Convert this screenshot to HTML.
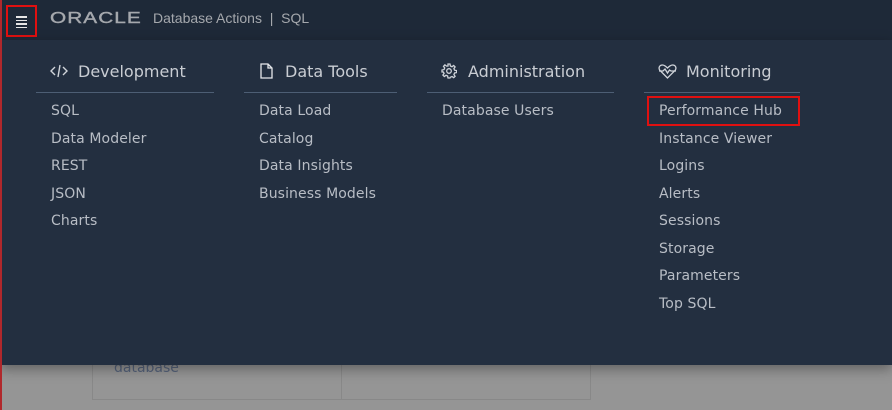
<!DOCTYPE html>
<html><head><style>
*{margin:0;padding:0;box-sizing:border-box}
body{width:892px;height:410px;overflow:hidden;background:#959595;position:relative;font-family:"DejaVu Sans",sans-serif}
.hdr{position:absolute;left:0;top:0;width:892px;height:40px;background:#1e2938}
.menu{position:absolute;left:0;top:40px;width:892px;height:325px;background:#232f40;box-shadow:0 4px 12px rgba(0,0,0,.35)}
.redl{position:absolute;left:0;top:0;width:2px;height:410px;background:#b0282c;z-index:5}
.ham{position:absolute;left:6px;top:5px;width:31px;height:32px;border:2px solid #e01010}
.ham i{position:absolute;left:8px;width:11px;height:1.5px;background:#e6e6e6}
.logo{position:absolute;left:50px;top:10px;color:#a5a8ad;font:16px "Liberation Sans",sans-serif;letter-spacing:.8px;transform:scaleX(1.3);transform-origin:left;-webkit-text-stroke:.4px #a5a8ad}
.title{position:absolute;left:153px;top:10px;color:#a5a8ad;font:14px "Liberation Sans",sans-serif}
.h{position:absolute;color:#c9cdd3;font-size:16px;letter-spacing:0}
.line{position:absolute;height:1px;background:#4d5e74}
.it{position:absolute;color:#b8bdc5;font-size:14px;letter-spacing:.1px}
.card{position:absolute;left:92px;top:340px;width:499px;height:60px;border:1px solid #888;border-top:none}
.card:after{content:"";position:absolute;left:248px;top:0;width:1px;height:60px;background:#888}
svg{position:absolute}
</style></head><body>
<div class="redl"></div>
<div class="card"></div>
<div style="position:absolute;left:114px;top:360px;color:#55627a;font-size:14px">database</div>
<div class="hdr">
<div class="ham"><i style="top:9px"></i><i style="top:12.5px"></i><i style="top:16px"></i><i style="top:19.5px"></i></div>
<div class="logo">ORACLE</div>
<div class="title">Database Actions &nbsp;|&nbsp; SQL</div>
</div>
<div class="menu">
<svg style="left:50px;top:24px" width="18" height="14" viewBox="0 0 18 14" fill="none" stroke="#d0d4da" stroke-width="1.4"><path d="M5 3L1 7l4 4M13 3l4 4-4 4M10 1L8 13"/></svg>
<div class="h" style="left:78px;top:22px">Development</div>
<svg style="left:260px;top:23px" width="13" height="16" viewBox="0 0 13 16" fill="none" stroke="#e6e8eb" stroke-width="1.3"><path d="M1 1h7l4 4v10H1z M8 1v4h4"/></svg>
<div class="h" style="left:285px;top:22px">Data Tools</div>
<svg style="left:441px;top:23px" width="16" height="16" viewBox="0 0 16 16" fill="none" stroke="#d0d4da" stroke-width="1.3"><circle cx="8" cy="8" r="2.3"/><path d="M7 1h2l.4 2 1.6.7 1.7-1.2 1.4 1.4-1.2 1.7.7 1.6 2 .4v2l-2 .4-.7 1.6 1.2 1.7-1.4 1.4-1.7-1.2-1.6.7L9 15H7l-.4-2-1.6-.7-1.7 1.2-1.4-1.4 1.2-1.7L2.4 9 1 9V7l2-.4.7-1.6-1.2-1.7 1.4-1.4 1.7 1.2L7 3z"/></svg>
<div class="h" style="left:468px;top:22px">Administration</div>
<svg style="left:658px;top:24px" width="19" height="15" viewBox="0 0 19 15" fill="none" stroke="#d0d4da" stroke-width="1.3"><path d="M9.5 14L2 6.5C0 4 1.5 1 4.5 1 6.5 1 8 2.5 9.5 4 11 2.5 12.5 1 14.5 1 17.5 1 19 4 17 6.5z M1 7h4l2-2 2.5 4 2-3 1.5 1h5"/></svg>
<div class="h" style="left:686px;top:22px">Monitoring</div>
<div class="line" style="left:36px;width:178px;top:52px"></div>
<div class="line" style="left:244px;width:153px;top:52px"></div>
<div class="line" style="left:427px;width:187px;top:52px"></div>
<div class="line" style="left:644px;width:156px;top:52px"></div>
<div class="it" style="left:51px;top:63px">SQL</div>
<div class="it" style="left:51px;top:91px">Data Modeler</div>
<div class="it" style="left:51px;top:118px">REST</div>
<div class="it" style="left:51px;top:146px">JSON</div>
<div class="it" style="left:51px;top:173px">Charts</div>
<div class="it" style="left:259px;top:63px">Data Load</div>
<div class="it" style="left:259px;top:91px">Catalog</div>
<div class="it" style="left:259px;top:118px">Data Insights</div>
<div class="it" style="left:259px;top:146px">Business Models</div>
<div class="it" style="left:442px;top:63px">Database Users</div>
<div style="position:absolute;left:647px;top:56px;width:153px;height:30px;border:2px solid #e01010"></div>
<div class="it" style="left:659px;top:63px">Performance Hub</div>
<div class="it" style="left:659px;top:91px">Instance Viewer</div>
<div class="it" style="left:659px;top:118px">Logins</div>
<div class="it" style="left:659px;top:146px">Alerts</div>
<div class="it" style="left:659px;top:173px">Sessions</div>
<div class="it" style="left:659px;top:201px">Storage</div>
<div class="it" style="left:659px;top:228px">Parameters</div>
<div class="it" style="left:659px;top:256px">Top SQL</div>
</div>
</body></html>
